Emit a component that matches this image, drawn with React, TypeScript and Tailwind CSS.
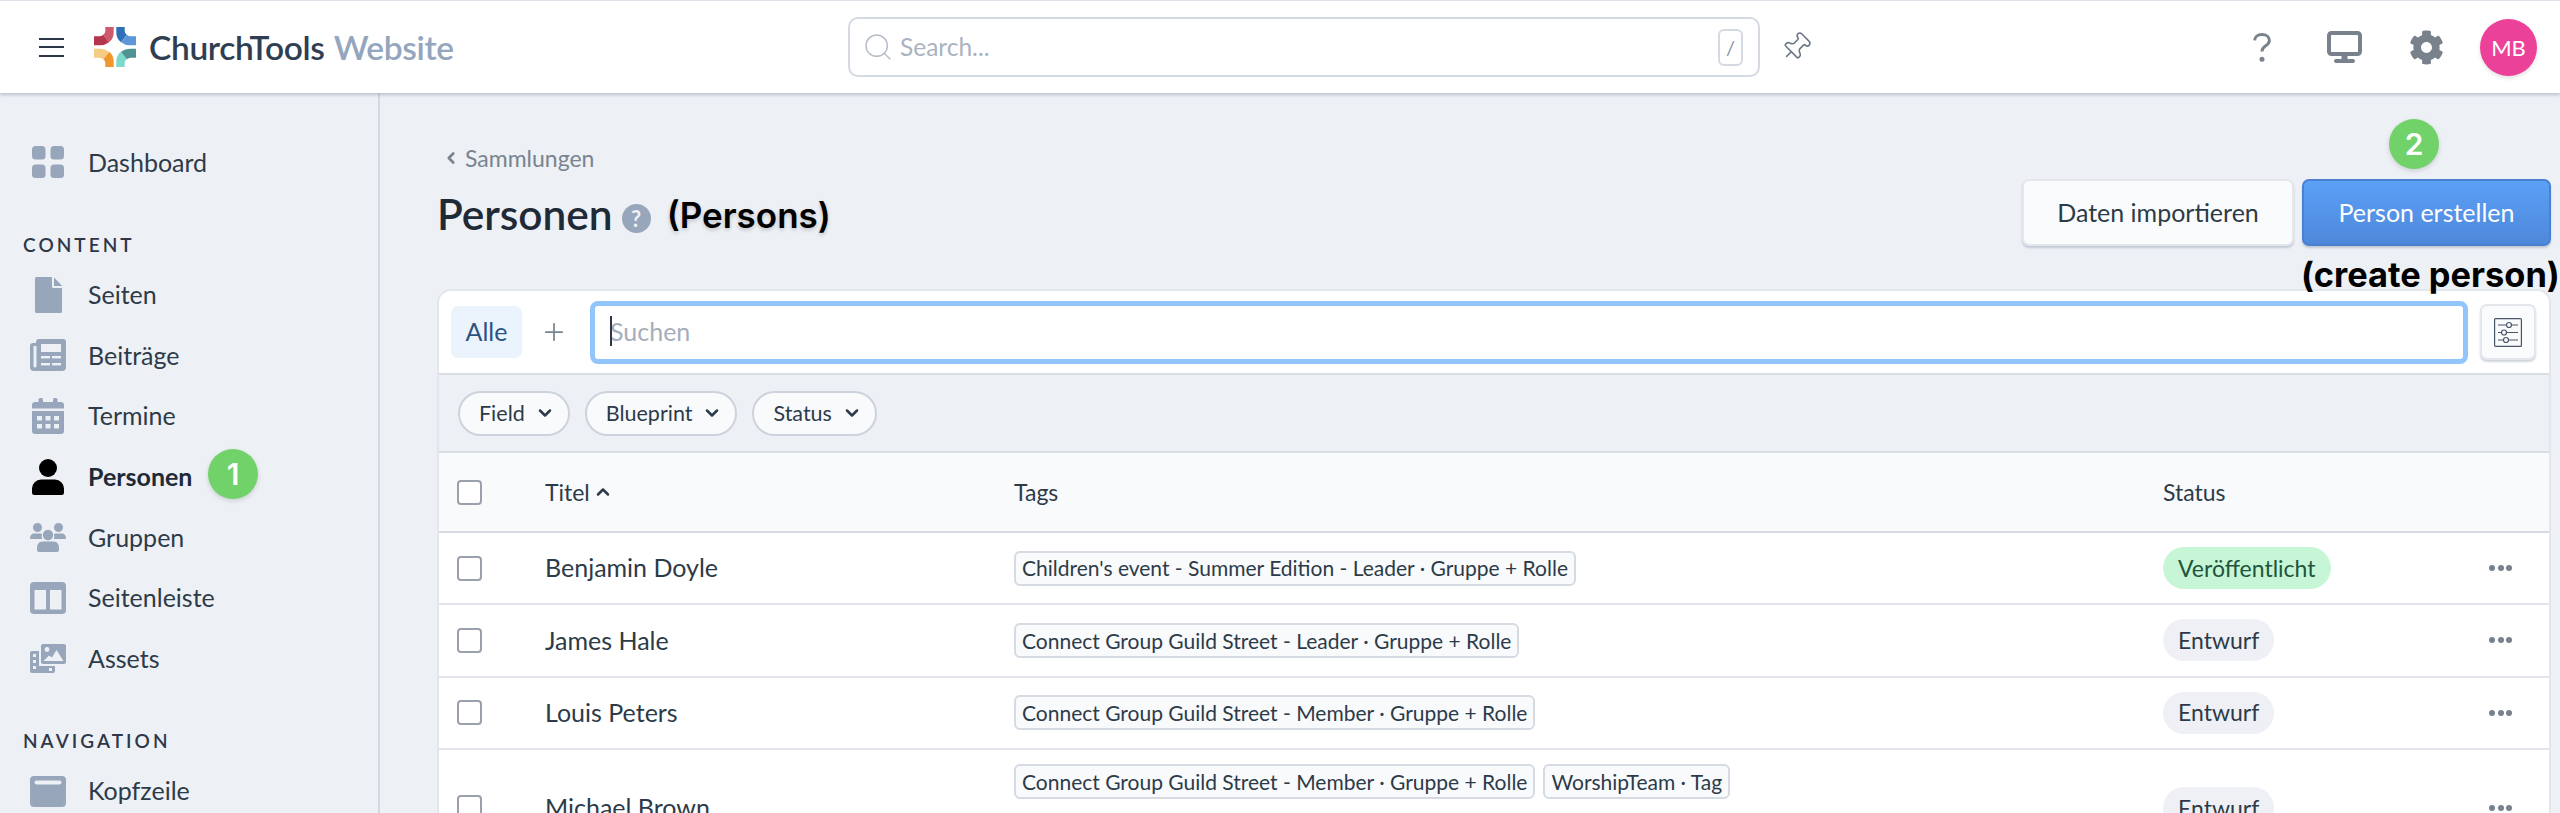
import { ChevronDown, ChevronLeft, ChevronUp, Pin, Plus, Search } from "lucide-react";
import { FaCog } from "react-icons/fa";
import type { ReactNode } from "react";

const iconClass = "fill-[#97a6ba]";

const LogoQuadrant = ({ v, h, transform }: { v: string; h: string; transform?: string }) => (
  <g transform={transform}>
    <path d="M11.3 0H19.7V5Q19.7 12 15 15.2L9.2 7.8Q11.3 6.5 11.3 4Z" fill={v} />
    <path d="M0 9.3H5Q7.6 9.3 9.2 7.8L15 15.2Q11 18.3 6 18.3H0Z" fill={h} />
  </g>
);

const Logo = () => (
  <svg viewBox="0 0 42 40" className="h-[40px] w-[42px] shrink-0">
    <LogoQuadrant v="#cf5a6c" h="#b5364c" />
    <LogoQuadrant v="#2f6fb8" h="#5e97d8" transform="matrix(-1 0 0 1 42 0)" />
    <LogoQuadrant v="#f0982f" h="#f6cb83" transform="matrix(1 0 0 -1 0 40)" />
    <LogoQuadrant v="#7fd8cc" h="#4f9394" transform="matrix(-1 0 0 -1 42 40)" />
  </svg>
);

const DashboardIcon = () => (
  <svg viewBox="0 0 32 32" className={`h-[32px] w-[32px] ${iconClass}`}>
    <rect x="0" y="0" width="13.5" height="13.5" rx="3.5" />
    <rect x="18.5" y="0" width="13.5" height="13.5" rx="3.5" />
    <rect x="0" y="18.5" width="13.5" height="13.5" rx="3.5" />
    <rect x="18.5" y="18.5" width="13.5" height="13.5" rx="3.5" />
  </svg>
);

const PageIcon = () => (
  <svg viewBox="0 0 27 36" className={`h-[36px] w-[27px] ${iconClass}`}>
    <path d="M1.5 0H17V9.5a1.5 1.5 0 0 0 1.5 1.5H27V34.5a1.5 1.5 0 0 1-1.5 1.5H1.5A1.5 1.5 0 0 1 0 34.5V1.5A1.5 1.5 0 0 1 1.5 0Z" />
    <path d="M19 0.5L27 8.8V9H19Z" />
  </svg>
);

const NewsIcon = () => (
  <svg viewBox="0 0 36 32" className="h-[32px] w-[36px]">
    <path
      className={iconClass}
      d="M9 0H33a3 3 0 0 1 3 3V28a4 4 0 0 1-4 4H4a4 4 0 0 1-4-4V7a3 3 0 0 1 3-3H6V3a3 3 0 0 1 3-3Z"
    />
    <path d="M3.5 7V27a1.5 1.5 0 0 0 3 0V7Z" fill="#edf0f5" />
    <rect x="11" y="5" width="20" height="8" fill="#edf0f5" />
    <rect x="11" y="17" width="9" height="2.4" fill="#edf0f5" />
    <rect x="22" y="17" width="9" height="2.4" fill="#edf0f5" />
    <rect x="11" y="24" width="9" height="2.4" fill="#edf0f5" />
    <rect x="22" y="24" width="9" height="2.4" fill="#edf0f5" />
  </svg>
);

const CalendarIcon = () => (
  <svg viewBox="0 0 32 36" className="h-[36px] w-[32px]">
    <g className={iconClass}>
      <rect x="6.5" y="0" width="4.5" height="6" rx="1.5" />
      <rect x="21" y="0" width="4.5" height="6" rx="1.5" />
      <path d="M3 4H29a3 3 0 0 1 3 3V10.5H0V7a3 3 0 0 1 3-3Z" />
      <path d="M0 13H32V33a3 3 0 0 1-3 3H3a3 3 0 0 1-3-3Z" />
    </g>
    {[5, 13.5, 22].map((x) =>
      [18, 26].map((y) => <rect key={`${x}-${y}`} x={x} y={y} width="5" height="4.5" fill="#edf0f5" />),
    )}
  </svg>
);

const PersonIcon = () => (
  <svg viewBox="0 0 32 36" className="h-[36px] w-[32px] fill-black">
    <circle cx="16" cy="9" r="9" />
    <path d="M9 20.5H23A9 9 0 0 1 32 29.5V33.5A2.5 2.5 0 0 1 29.5 36H2.5A2.5 2.5 0 0 1 0 33.5V29.5A9 9 0 0 1 9 20.5Z" />
  </svg>
);

const GroupIcon = () => (
  <svg viewBox="0 0 36 29" className={`h-[29px] w-[36px] ${iconClass}`}>
    <circle cx="7.5" cy="4.5" r="4.5" />
    <circle cx="28.5" cy="4.5" r="4.5" />
    <circle cx="18" cy="12" r="5.2" />
    <path d="M4 10.5H10.5Q11.5 10.5 12 11.2Q11.2 13 12 16H0Q0 10.5 4 10.5Z" />
    <path d="M25.5 10.5H32Q36 10.5 36 16H24Q24.8 13 24 11.2Q24.5 10.5 25.5 10.5Z" />
    <path d="M12.5 18.5H23.5Q29 18.5 29 25V27A2 2 0 0 1 27 29H9A2 2 0 0 1 7 27V25Q7 18.5 12.5 18.5Z" />
  </svg>
);

const SidebarIcon = () => (
  <svg viewBox="0 0 36 32" className="h-[32px] w-[36px]">
    <rect width="36" height="32" rx="4" className={iconClass} />
    <rect x="4.5" y="8" width="11.5" height="19.5" fill="#edf0f5" />
    <rect x="20" y="8" width="11.5" height="19.5" fill="#edf0f5" />
  </svg>
);

const AssetsIcon = () => (
  <svg viewBox="0 0 36 29" className="h-[29px] w-[36px]">
    <path className={iconClass} d="M2 7H9V22H25V27A2 2 0 0 1 23 29H2A2 2 0 0 1 0 27V9A2 2 0 0 1 2 7Z" />
    <g fill="#edf0f5">
      <rect x="3" y="10" width="3" height="3" />
      <rect x="3" y="16" width="3" height="3" />
      <rect x="3" y="22" width="3" height="3" />
      <rect x="19" y="24" width="3" height="3" />
    </g>
    <rect className={iconClass} x="11" y="0" width="25" height="20" rx="2" />
    <circle cx="17" cy="5.5" r="2.4" fill="#edf0f5" />
    <path d="M13.5 17L19 11.5L22 13.5L26.5 6L33.5 17Z" fill="#edf0f5" />
  </svg>
);

const HeaderIcon = () => (
  <svg viewBox="0 0 36 31" className="h-[31px] w-[36px]">
    <rect width="36" height="31" rx="4" className={iconClass} />
    <rect x="4.5" y="4.5" width="27" height="4" rx="2" fill="#edf0f5" />
  </svg>
);

const HelpIcon = () => (
  <svg viewBox="0 0 18 29" className="h-[29px] w-[18px] fill-none stroke-[#78818c]">
    <path d="M1.6 7.4C1.8 3.8 4.8 1.6 9 1.6c4.2 0 7.4 2.4 7.4 5.9 0 3-2 4.3-4 5.6-2.1 1.4-3.4 2.6-3.4 5.4" strokeWidth="3" />
    <circle cx="9" cy="26.3" r="2.5" fill="#78818c" stroke="none" />
  </svg>
);

const MonitorIcon = () => (
  <svg viewBox="0 0 35 32" className="h-[32px] w-[35px]">
    <rect x="2" y="2" width="31" height="21" rx="2.5" fill="none" stroke="#78818c" strokeWidth="4" />
    <rect x="14.5" y="24" width="6" height="5" fill="#78818c" />
    <rect x="7" y="28" width="21" height="4" rx="2" fill="#78818c" />
  </svg>
);

const SlidersIcon = () => (
  <svg viewBox="0 0 28 29" className="h-[29px] w-[28px] fill-none stroke-[#4a5568]" strokeWidth="1.2">
    <rect x="0.6" y="0.6" width="26.8" height="27.8" rx="1" />
    <path d="M4 7H12.5M17.5 7H24M4 14.5H7.5M12.5 14.5H24M4 22H9.5M14.5 22H24" />
    <circle cx="15" cy="7" r="2.5" />
    <circle cx="10" cy="14.5" r="2.5" />
    <circle cx="12" cy="22" r="2.5" />
  </svg>
);

const Badge = ({ children, className }: { children: ReactNode; className: string }) => (
  <div
    className={`absolute flex h-[50px] w-[50px] items-center justify-center rounded-full bg-[#70d268] font-[Inter,sans-serif] text-[30px] font-semibold text-white shadow-[0_2px_5px_rgba(0,0,0,0.14)] ${className}`}
  >
    {children}
  </div>
);

const NavItem = ({ icon, label, active, badge }: { icon: ReactNode; label: string; active?: boolean; badge?: boolean }) => (
  <div className="relative flex h-[60.6px] items-center gap-[22px] pl-[30px]">
    <div className="flex w-[36px] shrink-0 justify-center">{icon}</div>
    <span className={`text-[25px] ${active ? "font-bold text-[#1f2a37]" : "text-[#2d3b48]"}`}>{label}</span>
    {badge && <Badge className="left-[208px] top-[3px]">1</Badge>}
  </div>
);

const SectionLabel = ({ children }: { children: string }) => (
  <div className="mb-[8px] mt-[40px] h-[24px] pl-[23px] text-[19px] font-semibold uppercase leading-[24px] tracking-[0.16em] text-[#2d3748]">
    {children}
  </div>
);

const Sidebar = () => (
  <aside className="w-[380px] shrink-0 border-r-2 border-[#d3d8e1] pt-[39px]">
    <NavItem icon={<DashboardIcon />} label="Dashboard" />
    <SectionLabel>Content</SectionLabel>
    <NavItem icon={<PageIcon />} label="Seiten" />
    <NavItem icon={<NewsIcon />} label="Beiträge" />
    <NavItem icon={<CalendarIcon />} label="Termine" />
    <NavItem icon={<PersonIcon />} label="Personen" active badge />
    <NavItem icon={<GroupIcon />} label="Gruppen" />
    <NavItem icon={<SidebarIcon />} label="Seitenleiste" />
    <NavItem icon={<AssetsIcon />} label="Assets" />
    <SectionLabel>Navigation</SectionLabel>
    <NavItem icon={<HeaderIcon />} label="Kopfzeile" />
  </aside>
);

const TopBar = () => (
  <header className="relative z-10 flex h-[93px] shrink-0 items-center border-t border-[#dfe3ea] bg-white shadow-[0_2px_3px_rgba(100,116,139,0.35)]">
    <div className="flex w-[848px] shrink-0 items-center pl-[39px]">
      <div className="flex w-[25px] flex-col gap-[6.5px]">
        <span className="h-[2px] bg-[#2d3748]" />
        <span className="h-[2px] bg-[#2d3748]" />
        <span className="h-[2px] bg-[#2d3748]" />
      </div>
      <div className="ml-[30px]">
        <Logo />
      </div>
      <span className="ml-[13px] text-[33.5px] font-semibold tracking-[-0.01em] text-[#2f3e52]">ChurchTools</span>
      <span className="ml-[9px] text-[33.5px] font-semibold tracking-[-0.01em] text-[#94a6bd]">Website</span>
    </div>
    <div className="flex h-[60px] w-[912px] shrink-0 items-center rounded-[10px] border-2 border-[#d5dae2] pl-[12px] pr-[15px]">
      <Search className="h-[32px] w-[32px] text-[#b7bec9]" strokeWidth={1.1} />
      <span className="ml-[6px] text-[24.5px] text-[#aab3bf]">Search...</span>
      <span className="ml-auto flex h-[37px] w-[25px] items-center justify-center rounded-[6px] border-2 border-[#d5dae2] text-[20px] text-[#8a94a3]">
        /
      </span>
    </div>
    <Pin className="ml-[20px] h-[32px] w-[32px] rotate-45 text-[#6b7785]" strokeWidth={1.2} />
    <div className="ml-auto flex items-center pr-[23px]">
      <HelpIcon />
      <div className="ml-[56px]">
        <MonitorIcon />
      </div>
      <FaCog className="ml-[47px] h-[35px] w-[35px] text-[#78818c]" />
      <div className="ml-[36px] flex h-[57px] w-[57px] items-center justify-center rounded-full bg-[#ec4199] text-[22px] text-white shadow-[0_2px_4px_rgba(0,0,0,0.12)]">
        MB
      </div>
    </div>
  </header>
);

const FilterPill = ({ label }: { label: string }) => (
  <div className="flex h-[45px] items-center gap-[10px] rounded-full border-2 border-[#cdd3dc] bg-[#f8fafc] pl-[19px] pr-[13px] text-[21.5px] text-[#2d3b48]">
    {label}
    <ChevronDown className="h-[20px] w-[20px]" strokeWidth={3} />
  </div>
);

const Checkbox = () => <div className="h-[25px] w-[25px] rounded-[4px] border-2 border-[#9aa1ad] bg-white" />;

const Tag = ({ label }: { label: string }) => (
  <span className="flex h-[35px] items-center whitespace-nowrap rounded-[6px] border-2 border-[#d5dae3] bg-[#f8fafc] px-[6px] text-[21px] text-[#2d3b48]">
    {label}
  </span>
);

const rows = [
  { name: "Benjamin Doyle", tags: ["Children's event - Summer Edition - Leader · Gruppe + Rolle"], status: "Veröffentlicht" },
  { name: "James Hale", tags: ["Connect Group Guild Street - Leader · Gruppe + Rolle"], status: "Entwurf" },
  { name: "Louis Peters", tags: ["Connect Group Guild Street - Member · Gruppe + Rolle"], status: "Entwurf" },
  {
    name: "Michael Brown",
    tags: ["Connect Group Guild Street - Member · Gruppe + Rolle", "WorshipTeam · Tag"],
    status: "Entwurf",
    tall: true,
  },
];

const Row = ({ name, tags, status, tall }: { name: string; tags: string[]; status: string; tall?: boolean }) => (
  <div
    className={`grid grid-cols-[106px_469px_1149px_1fr] items-center border-b-2 border-[#e2e6ec] bg-white ${tall ? "h-[118px]" : "h-[72.3px]"}`}
  >
    <div className="pl-[18px]">
      <Checkbox />
    </div>
    <div className="text-[25px] text-[#2d3b48]">{name}</div>
    <div className={`flex gap-[8px] ${tall ? "self-start pt-[14px]" : ""}`}>
      {tags.map((t) => (
        <Tag key={t} label={t} />
      ))}
    </div>
    <div className="flex items-center justify-between pr-[37px]">
      <span
        className={`flex h-[42px] items-center rounded-full px-[15px] text-[23px] ${status === "Entwurf" ? "bg-[#eef0f5] text-[#2d3b48]" : "bg-[#c6f6d5] text-[#22543d]"}`}
      >
        {status}
      </span>
      <span className="flex gap-[2.5px]">
        <i className="h-[6px] w-[6px] rounded-full bg-[#78818c]" />
        <i className="h-[6px] w-[6px] rounded-full bg-[#78818c]" />
        <i className="h-[6px] w-[6px] rounded-full bg-[#78818c]" />
      </span>
    </div>
  </div>
);

const Main = () => (
  <main className="relative min-w-0 flex-1 pl-[57px] pr-[9px]">
    <div className="flex h-[196px] items-start justify-between">
      <div>
        <div className="mt-[50px] flex h-[30px] items-center pl-[5px] text-[23px] text-[#78848f]">
          <ChevronLeft className="mr-[5px] h-[18px] w-[18px]" strokeWidth={3.5} />
          Sammlungen
        </div>
        <div className="mt-[13px] flex items-center">
          <h1 className="text-[42.4px] font-semibold leading-[56px] text-[#1f2a37]">Personen</h1>
          <span className="ml-[9px] mt-[9px] flex h-[29px] w-[29px] items-center justify-center rounded-full bg-[#97a6ba] text-[22px] font-bold text-[#edf0f5]">
            ?
          </span>
          <span className="ml-[16px] mt-[3px] font-[Inter,sans-serif] text-[35px] font-semibold text-black [text-shadow:0_2px_4px_rgba(0,0,0,0.2)]">
            (Persons)
          </span>
        </div>
      </div>
      <div className="mt-[86px] flex gap-[8px]">
        <div className="flex h-[67px] w-[272px] items-center justify-center rounded-[7px] border-2 border-[#e3e6ec] bg-[#fafbfc] text-[25px] text-[#2d3b48] shadow-[0_2px_2px_rgba(100,116,139,0.3)]">
          Daten importieren
        </div>
        <div className="flex h-[67px] w-[249px] items-center justify-center rounded-[7px] border-2 border-[#4a80cf] bg-linear-to-b from-[#5ba0f7] to-[#4e88da] text-[25px] text-white shadow-[0_2px_2px_rgba(100,116,139,0.3)]">
          Person erstellen
        </div>
      </div>
    </div>
    <Badge className="left-[2009px] top-[26px]">2</Badge>

    <section className="overflow-hidden rounded-t-[14px] border-x-2 border-t-2 border-[#e3e6ec] bg-white">
      <div className="flex h-[84px] items-center border-b-2 border-[#d9dde4] pl-[12px] pr-[13px]">
        <div className="flex h-[52px] w-[71px] items-center justify-center rounded-[7px] bg-[#ebf4fd] text-[25px] text-[#2c5282]">
          Alle
        </div>
        <Plus className="ml-[18px] h-[28px] w-[28px] text-[#78848f]" strokeWidth={1.5} />
        <div className="relative ml-[22px] flex h-[63px] flex-1 items-center rounded-[8px] border-[5px] border-[#93c5fd] bg-white pl-[15px] text-[25px] text-[#a5aeba]">
          <span className="absolute left-[15px] top-[10px] h-[30px] w-[1.5px] bg-[#2d3748]" />
          Suchen
        </div>
        <div className="ml-[12px] flex h-[56px] w-[56px] items-center justify-center rounded-[7px] border-2 border-[#e3e6ec] bg-[#fafbfc] shadow-[0_2px_2px_rgba(100,116,139,0.3)]">
          <SlidersIcon />
        </div>
      </div>
      <div className="flex h-[78px] items-center gap-[15px] border-b-2 border-[#d9dde4] bg-[#edf0f5] pl-[19px]">
        <FilterPill label="Field" />
        <FilterPill label="Blueprint" />
        <FilterPill label="Status" />
      </div>
      <div className="grid h-[80px] grid-cols-[106px_469px_1149px_1fr] items-center border-b-2 border-[#d5dae3] bg-[#f8fafc] text-[23px] text-[#2d3b48]">
        <div className="pl-[18px]">
          <Checkbox />
        </div>
        <div className="flex items-center gap-[3px]">
          Titel
          <ChevronUp className="h-[20px] w-[20px]" strokeWidth={3} />
        </div>
        <div>Tags</div>
        <div>Status</div>
      </div>
      {rows.map((r) => (
        <Row key={r.name} {...r} />
      ))}
    </section>
    <div className="absolute left-[1921px] top-[162px] whitespace-nowrap font-[Inter,sans-serif] text-[34.4px] font-bold leading-[40px] text-black">
      (create person)
    </div>
  </main>
);

export default function App() {
  return (
    <div className="flex h-[813px] flex-col overflow-hidden bg-[#edf0f5] font-[Lato,sans-serif]">
      <TopBar />
      <div className="flex min-h-0 flex-1">
        <Sidebar />
        <Main />
      </div>
    </div>
  );
}
